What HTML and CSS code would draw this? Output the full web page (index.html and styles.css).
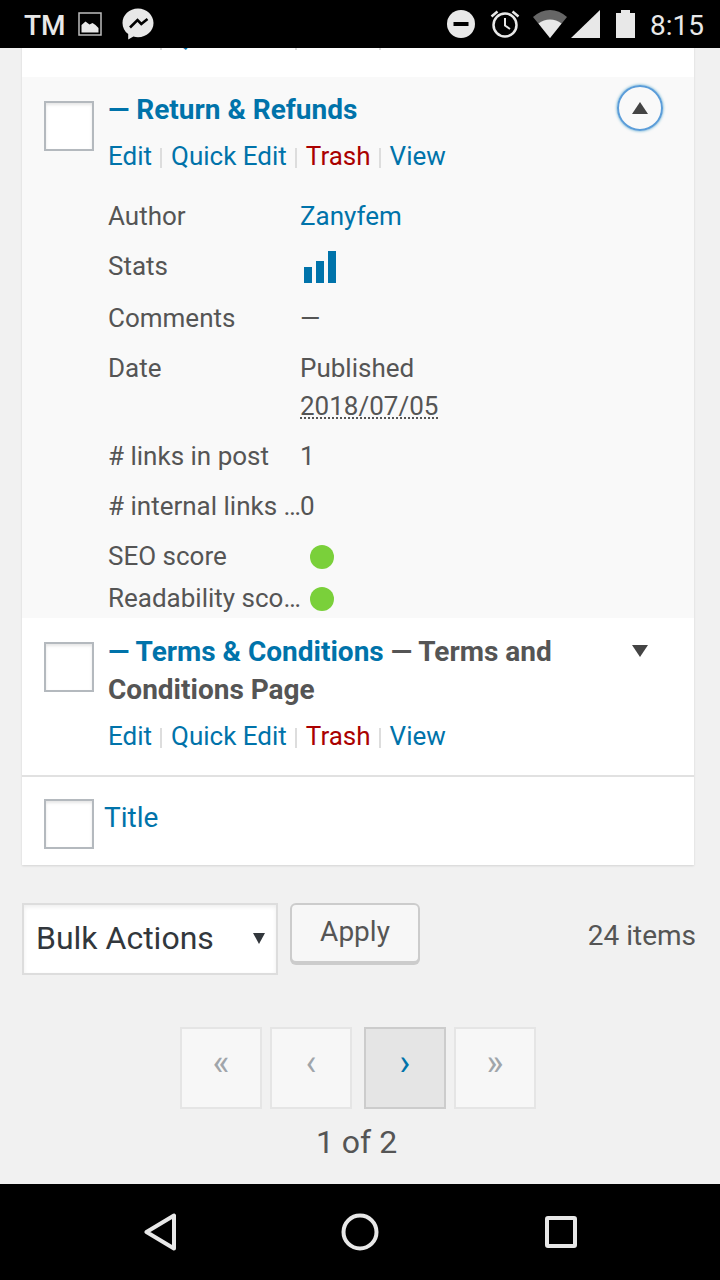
FILE: index.html
```html
<!DOCTYPE html>
<html lang="en">
<head>
    <meta charset="UTF-8">
    <meta name="viewport" content="width=device-width, initial-scale=1.0">
    <title>Pages</title>
    <link rel="stylesheet" href="styles.css">
</head>
<body>
    <header class="status-bar">
        <span class="carrier">TM</span>
        <svg class="icon-picture" width="24" height="24" viewBox="0 0 24 24">
            <rect x="1" y="1" width="22" height="22" fill="none" stroke="#bdbdbd" stroke-width="1.5"/>
            <path d="M3.5 20.5V13l4-3.5 4 3 3-1.5 3 2 3 3v4.5z" fill="#e8e8e8"/>
        </svg>
        <svg class="icon-messenger" width="32" height="32" viewBox="0 0 32 32">
            <path d="M16 0.5C7.300 0.500 0.500 7 0.500 15c0 4.600 2.200 8.500 5.700 11.100V31.500l5.200-2.900c1.500 0.400 3 0.600 4.600 0.600 8.700 0 15.500-6.300 15.500-14.200S24.700 0.500 16 0.500z" fill="#e8e8e8"/>
            <path d="M8 19.500l7.500-7.500 3.800 4 6.200-5" fill="none" stroke="#000" stroke-width="2.600"/>
        </svg>
        <svg class="icon-system" width="188" height="28" viewBox="0 0 188 28">
            <!-- do not disturb -->
            <circle cx="14" cy="14" r="14" fill="#e8e8e8"/>
            <rect x="6.500" y="12" width="15" height="4" fill="#000"/>
            <!-- alarm -->
            <circle cx="58" cy="15" r="11.500" fill="none" stroke="#e8e8e8" stroke-width="2.500"/>
            <path d="M58 8v7.500l5 3.500" fill="none" stroke="#e8e8e8" stroke-width="2"/>
            <path d="M44.500 6.500L50.500 1.500M71.500 6.500L65.500 1.500" stroke="#e8e8e8" stroke-width="2.500"/>
            <!-- wifi -->
            <path d="M86 7C96 -2.300 110 -2.300 120 7L103 28z" fill="#666"/>
            <path d="M91.500 13.500C98 8 108 8 114.500 13.500L103 28z" fill="#e8e8e8"/>
            <!-- signal -->
            <path d="M124 28L153 0V28z" fill="#e8e8e8"/>
            <!-- battery -->
            <path d="M174 0h9v3h5v25h-19V3h5z" fill="#e8e8e8"/>
        </svg>
        <span class="clock">8:15</span>
    </header>

    <main class="screen">
        <div class="pages-card">
            <div class="page-row cut-row">
                <div class="row-actions">
                    <a href="#">Edit</a><span class="sep"></span><a href="#">Quick Edit</a><span class="sep"></span><a href="#" class="trash">Trash</a><span class="sep"></span><a href="#">View</a>
                </div>
            </div>

            <div class="page-row open-row">
                <span class="check"></span>
                <div class="row-body">
                    <h2 class="row-title"><a href="#">— Return &amp; Refunds</a></h2>
                    <div class="row-actions">
                        <a href="#">Edit</a><span class="sep"></span><a href="#">Quick Edit</a><span class="sep"></span><a href="#" class="trash">Trash</a><span class="sep"></span><a href="#">View</a>
                    </div>
                    <div class="details">
                        <div class="detail"><span class="label">Author</span><a href="#" class="value">Zanyfem</a></div>
                        <div class="detail detail-stats">
                            <span class="label">Stats</span>
                            <svg class="value" width="36" height="32" viewBox="0 0 36 32">
                                <rect x="4" y="16" width="8" height="16" fill="#0073aa"/>
                                <rect x="16" y="10" width="8" height="22" fill="#0073aa"/>
                                <rect x="28" y="0" width="8" height="32" fill="#0073aa"/>
                            </svg>
                        </div>
                        <div class="detail"><span class="label">Comments</span><span class="value">—</span></div>
                        <div class="detail">
                            <span class="label">Date</span>
                            <span class="value">Published<br><abbr class="date">2018/07/05</abbr></span>
                        </div>
                        <div class="detail"><span class="label"># links in post</span><span class="value">1</span></div>
                        <div class="detail"><span class="label"># internal links in post</span><span class="value">0</span></div>
                        <div class="detail detail-seo"><span class="label">SEO score</span><span class="value dot"></span></div>
                        <div class="detail detail-read"><span class="label">Readability score</span><span class="value dot"></span></div>
                    </div>
                </div>
                <button type="button" class="toggle toggle-open"></button>
            </div>

            <div class="page-row">
                <span class="check"></span>
                <div class="row-body">
                    <h2 class="row-title"><a href="#">— Terms &amp; Conditions</a> — Terms and Conditions Page</h2>
                    <div class="row-actions">
                        <a href="#">Edit</a><span class="sep"></span><a href="#">Quick Edit</a><span class="sep"></span><a href="#" class="trash">Trash</a><span class="sep"></span><a href="#">View</a>
                    </div>
                </div>
                <button type="button" class="toggle"></button>
            </div>

            <div class="card-foot">
                <span class="check"></span>
                <a href="#" class="foot-title">Title</a>
            </div>
        </div>

        <div class="tablenav">
            <div class="bulk-select">Bulk Actions<span class="select-arrow"></span></div>
            <button type="button" class="apply">Apply</button>
            <span class="item-count">24 items</span>
        </div>

        <div class="pagination">
            <span class="page-btn">«</span>
            <span class="page-btn">‹</span>
            <a href="#" class="page-btn current">›</a>
            <span class="page-btn">»</span>
        </div>
        <div class="page-count">1 of 2</div>
    </main>

    <footer class="nav-bar">
        <svg width="32" height="38" viewBox="0 0 32 38">
            <path d="M30 2.500V35.500L2.500 19z" fill="none" stroke="#e8e8e8" stroke-width="4" stroke-linejoin="round"/>
        </svg>
        <svg width="38" height="38" viewBox="0 0 38 38">
            <circle cx="19" cy="19" r="16.500" fill="none" stroke="#e8e8e8" stroke-width="4"/>
        </svg>
        <svg width="34" height="34" viewBox="0 0 34 34">
            <rect x="3" y="3" width="28" height="28" rx="1" fill="none" stroke="#e8e8e8" stroke-width="4"/>
        </svg>
    </footer>
</body>
</html>
```

FILE: styles.css
```css
body {
    font-family: Roboto, "Liberation Sans", sans-serif;
    font-size: 26px;
    line-height: 38px;
    color: #555;
    background-color: #f1f1f1;
    margin: 0;
    height: 1280px;
    display: flex;
    flex-direction: column;
    overflow: hidden;
}
a {
    color: #0073aa;
    text-decoration: none;
}

/* Android status bar */
.status-bar {
    height: 48px;
    flex: none;
    background-color: #000;
    color: #e8e8e8;
    display: flex;
    align-items: center;
    padding-left: 24px;
    position: relative;
    z-index: 1;
}
.carrier {
    font-size: 28px;
    font-weight: 500;
    width: 40px;
    margin-top: 3px;
}
.icon-picture {
    margin-left: 14px;
}
.icon-messenger {
    margin-left: 20px;
}
.icon-system {
    margin-left: auto;
}
.clock {
    font-size: 28px;
    margin: 3px 16px 0 15px;
}

.screen {
    flex: 1;
    min-height: 0;
    padding: 0 22px;
}

/* Pages list */
.pages-card {
    width: 672px;
    background-color: #fff;
    box-shadow: 0 1px 2px rgba(0, 0, 0, 0.12);
}
.page-row {
    display: flex;
    position: relative;
    padding: 15px 0 19px 22px;
}
.cut-row {
    margin-top: -30px;
    padding: 0 0 19px 86px;
}
.open-row {
    background-color: #f9f9f9;
    padding-bottom: 0;
}
.open-row .row-title {
    margin-top: -1px;
}
.check {
    width: 50px;
    height: 50px;
    flex: none;
    box-sizing: border-box;
    margin-top: 9px;
    margin-right: 14px;
    background-color: #fff;
    border: 2px solid #b4b9be;
    box-shadow: inset 0 2px 3px rgba(0, 0, 0, 0.1);
}
.row-title {
    margin: 0;
    max-width: 480px;
    font-size: 28px;
    font-weight: 700;
    line-height: 38px;
}
.row-actions {
    line-height: 40px;
    margin-top: 7px;
    white-space: nowrap;
}
.cut-row .row-actions {
    margin-top: 0;
}
.row-actions .sep {
    display: inline-block;
    width: 2px;
    height: 20px;
    margin: 0 9px 0 8px;
    vertical-align: -3px;
    background-color: #ddd;
}
.row-actions .trash {
    color: #a00;
}
.toggle {
    position: absolute;
    top: 8px;
    left: 595px;
    width: 46px;
    height: 46px;
    padding: 0;
    background: none;
    border: none;
    border-radius: 50%;
}
.toggle::after {
    content: "";
    position: absolute;
    left: 15px;
    top: 19px;
    border-left: 8px solid transparent;
    border-right: 8px solid transparent;
    border-top: 12px solid #444;
}
.toggle-open {
    border: 2px solid #5b9dd9;
    box-shadow: 0 0 3px rgba(30, 140, 190, 0.8);
    box-sizing: border-box;
}
.toggle-open::after {
    left: 13px;
    top: 15px;
    border-top: none;
    border-bottom: 12px solid #444;
}

/* Expanded row details */
.details {
    margin-top: 15px;
}
.detail {
    display: flex;
    align-items: flex-start;
    padding: 6px 0;
}
.detail-stats {
    padding: 10px 0;
}
.detail-seo {
    padding: 6px 0 0;
}
.detail-read {
    padding: 4px 0 1px;
}
.label {
    width: 194px;
    margin-right: -2px;
    flex: none;
    white-space: nowrap;
    overflow: hidden;
    text-overflow: ellipsis;
}
.detail-stats .label {
    margin: -4px -2px -2px 0;
}
.value {
    display: block;
}
.date {
    text-decoration: underline dotted 2px;
    text-underline-offset: 2px;
}
.dot {
    width: 24px;
    height: 24px;
    margin: 8px 0 0 10px;
    border-radius: 50%;
    background-color: #7ad03a;
}
.card-foot {
    display: flex;
    height: 88px;
    border-top: 2px solid #e1e1e1;
    padding-left: 22px;
}
.card-foot .check {
    margin-top: 22px;
    margin-right: 10px;
}
.foot-title {
    font-size: 28px;
    margin-top: 22px;
}

/* Bulk actions and paging */
.tablenav {
    display: flex;
    align-items: flex-start;
    margin-top: 38px;
    width: 674px;
}
.bulk-select {
    width: 256px;
    height: 72px;
    box-sizing: border-box;
    display: flex;
    align-items: center;
    justify-content: space-between;
    padding: 0 11px 2px 12px;
    font-size: 32px;
    color: #32373c;
    background-color: #fff;
    border: 2px solid #ddd;
    box-shadow: inset 0 2px 4px rgba(0, 0, 0, 0.07);
}
.select-arrow {
    border-left: 6px solid transparent;
    border-right: 6px solid transparent;
    border-top: 11px solid #32373c;
}
.apply {
    width: 130px;
    height: 60px;
    margin-left: 12px;
    padding: 0 0 4px;
    font-family: inherit;
    font-size: 28px;
    color: #555;
    background-color: #f7f7f7;
    border: 2px solid #ccc;
    border-radius: 6px;
    box-shadow: 0 2px 0 #ccc;
}
.item-count {
    margin-left: auto;
    margin-top: 14px;
    font-size: 28px;
}
.pagination {
    display: flex;
    justify-content: center;
    gap: 8px;
    margin-top: 52px;
    width: 672px;
}
.page-btn {
    width: 82px;
    height: 82px;
    box-sizing: border-box;
    display: flex;
    align-items: center;
    justify-content: center;
    padding-bottom: 10px;
    font-size: 36px;
    color: #a0a5aa;
    background-color: #f7f7f7;
    border: 2px solid #e5e5e5;
}
.page-btn.current {
    margin-left: 4px;
    color: #0073aa;
    background-color: #e5e5e5;
    border-color: #ccc;
}
.page-count {
    width: 669px;
    margin-top: 14px;
    font-size: 32px;
    text-align: center;
}

/* Android nav bar */
.nav-bar {
    height: 96px;
    flex: none;
    background-color: #000;
    display: flex;
    align-items: center;
    justify-content: space-between;
    padding: 0 142px 0 144px;
    position: relative;
}
```
